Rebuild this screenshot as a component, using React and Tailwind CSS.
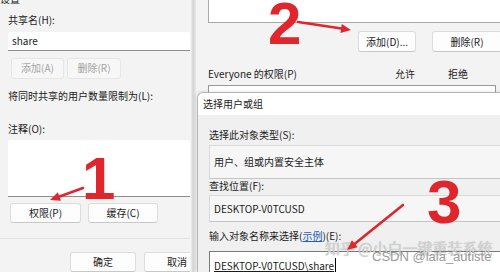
import React from "react";

function Arrow({ x1, y1, x2, y2 }) {
  const dx = x2 - x1, dy = y2 - y1;
  const len = Math.hypot(dx, dy);
  const ux = dx / len, uy = dy / len;
  const px = -uy, py = ux;
  const hl = 10, hw = 4.5;
  const bx = x2 - ux * hl, by = y2 - uy * hl;
  const pts = `${x2},${y2} ${bx + px * hw},${by + py * hw} ${bx - px * hw},${by - py * hw}`;
  return (
    <g>
      <line x1={x1} y1={y1} x2={bx + ux * 2} y2={by + uy * 2} stroke="#e0262d" strokeWidth="2.6" strokeLinecap="round" />
      <polygon points={pts} fill="#e0262d" />
    </g>
  );
}

function Btn({ children, className = "", disabled = false }) {
  return (
    <div
      className={
        "flex items-center justify-center rounded-[3px] border " +
        (disabled
          ? "border-[#e6e6e6] bg-[#f7f7f7] text-[#a3a3a3] "
          : "border-[#dcdcdc] border-b-[#c8c8c8] bg-[#fdfdfd] text-[#1b1b1b] ") +
        className
      }
    >
      {children}
    </div>
  );
}

export default function App() {
  return (
    <div className="relative flex h-[272px] w-[500px] overflow-hidden bg-[#f3f3f3] font-['Noto_Sans_CJK_SC',sans-serif] text-[10px] leading-[14px] text-[#1b1b1b]">
      {/* Left dialog: share settings */}
      <div className="flex w-[190px] shrink-0 flex-col bg-[#f3f3f3] pl-[8px]">
        <div className="-ml-[8px] -mt-[8px] h-[14px]">设置</div>
        <div className="mt-[7px] h-[14px]">共享名(H):</div>
        <div className="mt-[5px] flex h-[20px] items-center rounded-t-[3px] border-b border-[#8c8c8c] bg-white pl-[4px]">share</div>
        <div className="mt-[7px] ml-[3px] flex h-[21px] gap-[3px]">
          <Btn disabled className="w-[53px]">添加(A)</Btn>
          <Btn disabled className="w-[54px]">删除(R)</Btn>
        </div>
        <div className="mt-[10px] h-[14px]">将同时共享的用户数量限制为(L):</div>
        <div className="mt-[19px] h-[14px]">注释(O):</div>
        <div className="mt-[4px] h-[59px] rounded-t-[3px] border-b border-[#8c8c8c] bg-white" />
        <div className="mt-[6px] ml-[2px] flex h-[21px] gap-[7px]">
          <Btn className="w-[71px]">权限(P)</Btn>
          <Btn className="w-[70px]">缓存(C)</Btn>
        </div>
        <div className="-ml-[8px] mt-[15px] h-px bg-[#e2e2e2]" />
        <div className="ml-[62px] mt-[13px] flex h-[21px] gap-[8px]">
          <Btn className="w-[66px] shrink-0">确定</Btn>
          <Btn className="w-[66px] shrink-0">取消</Btn>
        </div>
      </div>

      {/* divider between windows */}
      <div className="w-[6px] shrink-0 bg-gradient-to-r from-[#fafafa] via-[#d4d4d4] to-[#e6e6e6]" />

      {/* Right: permissions dialog with overlaid select dialog */}
      <div className="flex min-w-0 flex-1 flex-col bg-[#f3f3f3]">
        <div className="ml-[12px] h-[23px] border-b border-l border-[#a9a9a9] bg-white" />
        <div className="ml-[162px] mt-[8px] flex h-[21px] gap-[16px]">
          <Btn className="w-[58px] shrink-0">添加(D)...</Btn>
          <Btn className="w-[70px] shrink-0">删除(R)</Btn>
        </div>
        <div className="ml-[12px] mt-[15px] flex h-[14px]">
          <span className="w-[187px]">Everyone 的权限(P)</span>
          <span className="w-[53px]">允许</span>
          <span>拒绝</span>
        </div>
        <div className="ml-[12px] mr-[4px] mt-[4px] h-[7px] border-l border-r border-t border-[#9a9a9a] bg-white" />

        {/* Select users or groups dialog */}
        <div className="ml-[1px] flex flex-1 flex-col overflow-hidden rounded-tl-[6px] border-l border-t border-[#b4b4b4] bg-[#f0f0f0] shadow-[-1px_-1px_3px_rgba(0,0,0,0.08)]">
          <div className="flex h-[22px] shrink-0 items-center bg-white pl-[5px]">选择用户或组</div>
          <div className="flex flex-col pl-[11px]">
            <div className="mt-[13px] h-[14px]">选择此对象类型(S):</div>
            <div className="mt-[3px] flex h-[34px] items-center border-b border-t border-l border-[#dadada] border-b-[#c4c4c4] bg-[#f6f6f6] pl-[4px]">用户、组或内置安全主体</div>
            <div className="mt-[0px] h-[14px]">查找位置(F):</div>
            <div className="mt-[2px] flex h-[27px] items-center border-b border-t border-l border-[#dadada] border-b-[#c4c4c4] bg-[#f6f6f6] pl-[4px]">DESKTOP-V0TCUSD</div>
            <div className="mt-[7px] h-[14px]">
              输入对象名称来选择(<span className="text-[#1a5fb4] underline">示例</span>)(E):
            </div>
            <div className="mt-[8px] flex h-[26px] items-start border-l border-t border-[#7a7a7a] bg-white pl-[4px] pt-[7px]">
              <span className="underline">DESKTOP-V0TCUSD\share</span>
              <span className="ml-[1px] mt-[-1px] h-[14px] w-px bg-black" />
            </div>
          </div>
        </div>
      </div>

      {/* Watermarks */}
      <div className="pointer-events-none absolute left-[325px] top-[239px] whitespace-nowrap font-['Noto_Sans_CJK_SC',sans-serif] text-[15px] leading-[18px] text-[#d2d2d2] [text-shadow:0_0_1px_rgba(120,120,120,0.5)]">
        知乎 @小白一键重装系统
      </div>
      <div className="pointer-events-none absolute left-[372px] top-[249px] whitespace-nowrap font-['Liberation_Sans',sans-serif] text-[13px] leading-[15px] text-[#9a9a9a]">
        CSDN @lala_autiste
      </div>

      {/* Red annotations */}
      <svg className="pointer-events-none absolute left-0 top-0" width="500" height="272" viewBox="0 0 500 272">
        <Arrow x1={83} y1={188} x2={50} y2={200} />
        <Arrow x1={298} y1={22} x2={351} y2={30} />
        <Arrow x1={403} y1={205} x2={347} y2={250} />
      </svg>
      <div className="pointer-events-none absolute left-[82px] top-[149px] font-['Liberation_Sans',sans-serif] text-[60px] font-bold leading-[60px] text-[#e0262d]">1</div>
      <div className="pointer-events-none absolute left-[268px] top-[-6px] font-['Liberation_Sans',sans-serif] text-[60px] font-bold leading-[60px] text-[#e0262d]">2</div>
      <div className="pointer-events-none absolute left-[427px] top-[172px] font-['Liberation_Sans',sans-serif] text-[62px] font-bold leading-[60px] text-[#e0262d]">3</div>
    </div>
  );
}
